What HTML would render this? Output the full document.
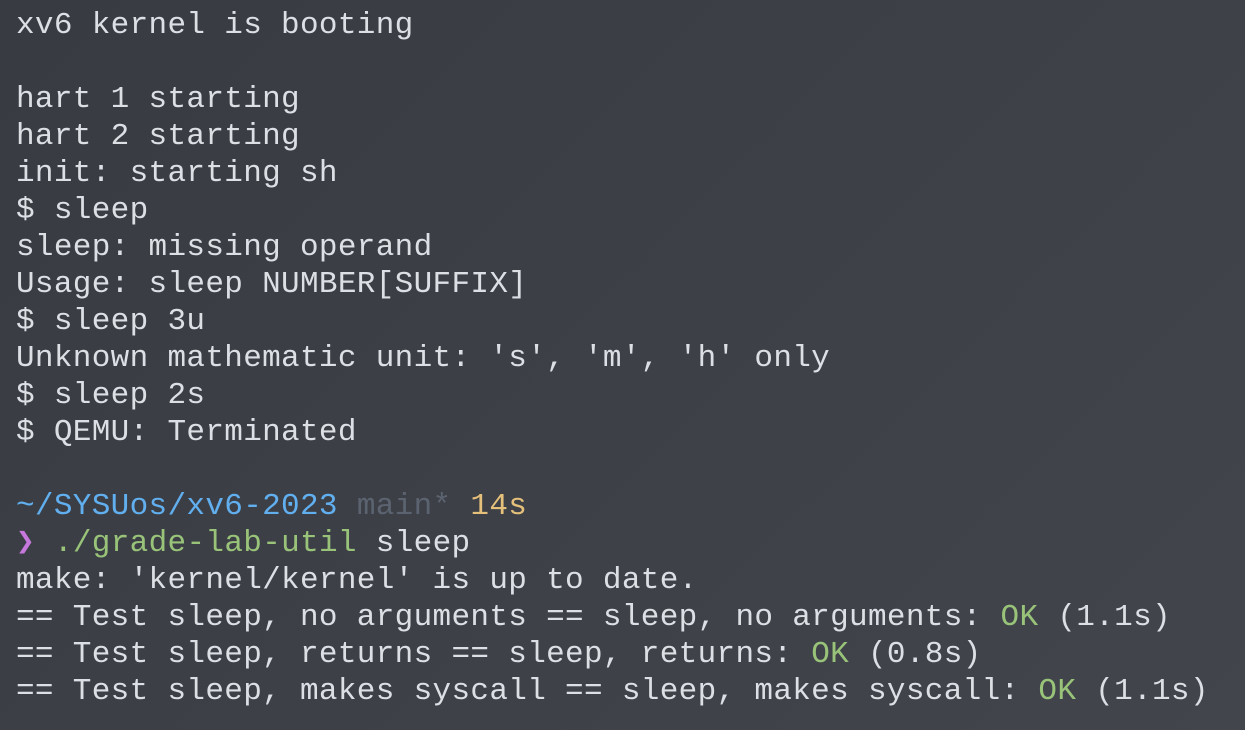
<!DOCTYPE html>
<html><head><style>
html,body{margin:0;padding:0;}
body{width:1245px;height:730px;overflow:hidden;background:linear-gradient(135deg,#383b42,#42454c);}
pre{margin:0;position:absolute;left:16px;top:7px;font-family:"Liberation Mono",monospace;font-size:31px;line-height:37px;letter-spacing:0.33px;color:#dcdfe4;white-space:pre;}
.b{color:#61afef}.g{color:#5c6370}.y{color:#e5c07b}.m{color:#c678dd}.gr{color:#98c379}
</style></head><body><pre>xv6 kernel is booting

hart 1 starting
hart 2 starting
init: starting sh
$ sleep
sleep: missing operand
Usage: sleep NUMBER[SUFFIX]
$ sleep 3u
Unknown mathematic unit: 's', 'm', 'h' only
$ sleep 2s
$ QEMU: Terminated

<span class="b">~/SYSUos/xv6-2023</span> <span class="g">main*</span> <span class="y">14s</span>
<span class="m">❯</span> <span class="gr">./grade-lab-util</span> sleep
make: 'kernel/kernel' is up to date.
== Test sleep, no arguments == sleep, no arguments: <span class="gr">OK</span> (1.1s)
== Test sleep, returns == sleep, returns: <span class="gr">OK</span> (0.8s)
== Test sleep, makes syscall == sleep, makes syscall: <span class="gr">OK</span> (1.1s)</pre></body></html>
